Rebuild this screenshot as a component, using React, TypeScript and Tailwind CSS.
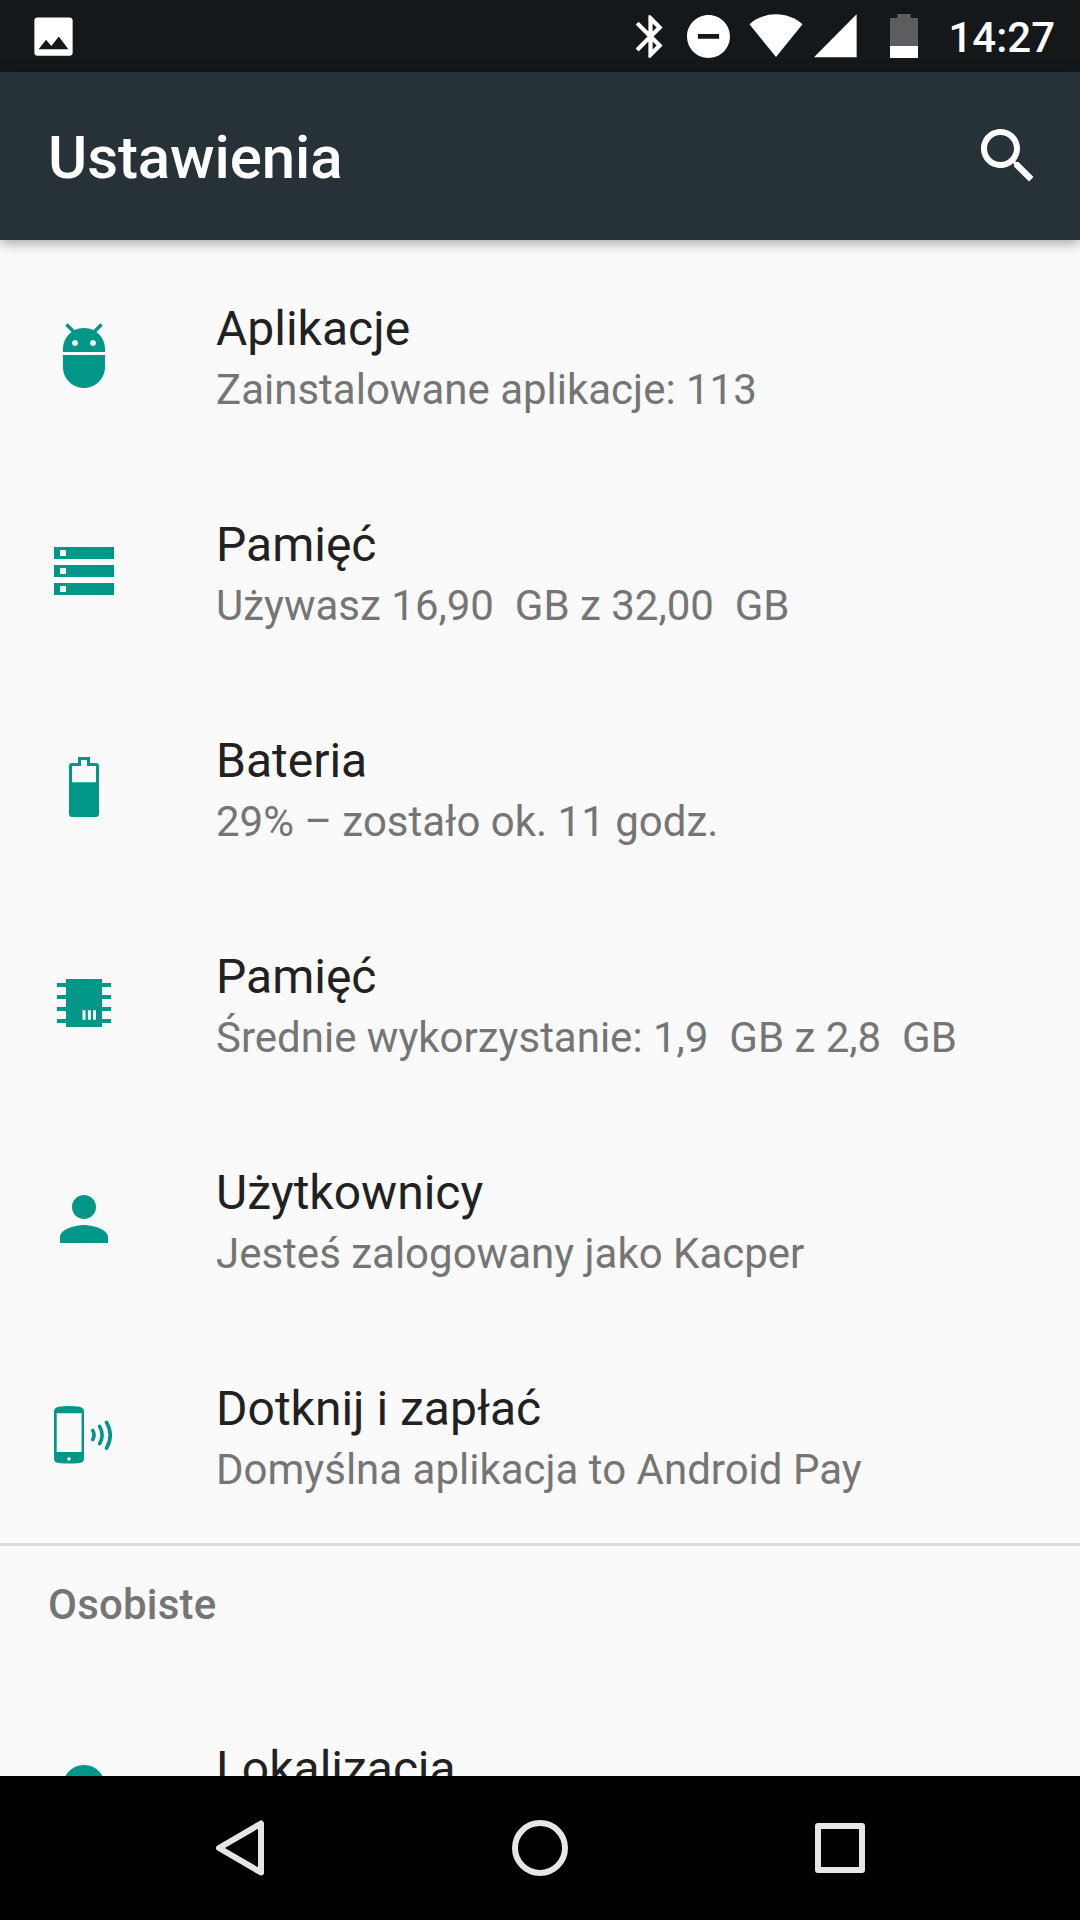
import type { ReactNode } from "react";

type SettingsItem = {
  title: string;
  summary?: string;
  icon: ReactNode;
};

const items: SettingsItem[] = [
  {
    title: "Aplikacje",
    summary: "Zainstalowane aplikacje: 113",
    icon: (
      <path d="M5 16c0 3.87 3.13 7 7 7s7-3.13 7-7v-4H5v4zM16.12 4.37l2.1-2.1-.82-.83-2.3 2.31C14.16 3.28 13.12 3 12 3s-2.14.28-3.09.75L6.6 1.44l-.82.83 2.1 2.1C6.14 5.64 5 7.68 5 10v1h14v-1c0-2.32-1.14-4.36-2.88-5.63zM9 9c-.55 0-1-.45-1-1s.45-1 1-1 1 .45 1 1-.45 1-1 1zm6 0c-.55 0-1-.45-1-1s.45-1 1-1 1 .45 1 1-.45 1-1 1z" />
    ),
  },
  {
    title: "Pamięć",
    summary: "Używasz 16,90\u00a0 GB z 32,00\u00a0 GB",
    icon: (
      <path d="M2 20h20v-4H2v4zm2-3h2v2H4v-2zM2 4v4h20V4H2zm4 3H4V5h2v2zm-4 7h20v-4H2v4zm2-3h2v2H4v-2z" />
    ),
  },
  {
    title: "Bateria",
    summary: "29% – zostało ok. 11 godz.",
    icon: (
      <path
        fillRule="evenodd"
        d="M16 4h-2V2h-4v2H8c-.6 0-1 .4-1 1v16c0 .6.4 1 1 1h8c.6 0 1-.4 1-1V5c0-.6-.4-1-1-1zM8 10.4V5h3V3h2v2h3v5.4H8z"
      />
    ),
  },
  {
    title: "Pamięć",
    summary: "Średnie wykorzystanie: 1,9\u00a0 GB z 2,8\u00a0 GB",
    icon: (
      <path
        fillRule="evenodd"
        d="M6 4h12v1.3h3v1.37h-3V9.3h3v1.37h-3v2.63h3v1.37h-3v2.63h3v1.37h-3V20H6v-1.33H3V17.3h3v-2.63H3V13.3h3v-2.63H3V9.3h3V6.67H3V5.3h3V4zM11.5 14.4v3.2h1v-3.2h-1zM13.3 14.4v3.2h1v-3.2h-1zM15.05 14.4v3.2h.95v-3.2h-.95z"
      />
    ),
  },
  {
    title: "Użytkownicy",
    summary: "Jesteś zalogowany jako Kacper",
    icon: (
      <path d="M12 12c2.21 0 4-1.79 4-4s-1.79-4-4-4-4 1.79-4 4 1.79 4 4 4zm0 2c-2.67 0-8 1.34-8 4v2h16v-2c0-2.66-5.33-4-8-4z" />
    ),
  },
  {
    title: "Dotknij i zapłać",
    summary: "Domyślna aplikacja to Android Pay",
    icon: (
      <>
        <path
          fillRule="evenodd"
          d="M2 4.3c0-1 .5-1.5 1.5-1.7 2.2-.37 4.8-.37 7 0 1 .2 1.5.7 1.5 1.7v15.5c0 .9-.5 1.4-1.5 1.5-2.2.27-4.8.27-7 0-1-.1-1.5-.6-1.5-1.5zM2.9 4.75v12.9h8.3V4.75zM7 19.4a.6.6 0 1 0 0 1.2.6.6 0 0 0 0-1.2z"
        />
        <g fill="none" stroke="currentColor" strokeWidth="1.2" strokeLinecap="round">
          <path d="M14.9 10.5q.9 1.5 0 3" />
          <path d="M17.2 9.1q1.7 2.9 0 5.8" />
          <path d="M19.5 7.8q2.5 4.3 0 8.6" />
        </g>
      </>
    ),
  },
];

const location: SettingsItem = {
  title: "Lokalizacja",
  icon: (
    <path d="M12 2C8.13 2 5 5.13 5 9c0 5.25 7 13 7 13s7-7.75 7-13c0-3.87-3.13-7-7-7zm0 9.5a2.5 2.5 0 0 1 0-5 2.5 2.5 0 0 1 0 5z" />
  ),
};

function StatusBar() {
  return (
    <div className="flex h-[72px] shrink-0 items-center bg-[#14181b] pr-[25px] pl-[28px] text-white">
      <svg className="size-[51px]" viewBox="0 0 24 24" fill="currentColor">
        <path d="M21 19V4.4C21 3.6 20.4 3 19.6 3H4.4C3.6 3 3 3.6 3 4.4v15.2c0 .8.6 1.4 1.4 1.4h15.2c.8 0 1.4-.6 1.4-1.4zM8.5 13.5l2.5 3.01L14.5 12l4.5 6H5z" />
      </svg>
      <div className="ml-auto flex items-center">
        <svg className="size-[51px]" viewBox="0 0 24 24" fill="currentColor">
          <path d="M17.71 7.71L12 2h-1v7.59L6.41 5 5 6.41 10.59 12 5 17.59 6.41 19 11 14.41V22h1l5.71-5.71-4.3-4.29 4.3-4.29zM13 5.83l1.88 1.88L13 9.59V5.83zm1.88 10.46L13 18.17v-3.76l1.88 1.88z" />
        </svg>
        <svg className="ml-[7px] size-[51px]" viewBox="0 0 24 24" fill="currentColor">
          <path d="M12 1.9C6.4 1.9 1.9 6.4 1.9 12S6.4 22.1 12 22.1 22.1 17.6 22.1 12 17.6 1.9 12 1.9zM17 13.1H7v-2.3h10v2.3z" />
        </svg>
        <svg className="ml-[15px] h-[44px] w-[54px]" viewBox="0 0 54 44" fill="currentColor">
          <path d="M27 43L.5 10.2C7.5 4 16.5.3 27 .3s19.5 3.7 26.5 9.9z" />
        </svg>
        <svg className="ml-[11px] h-[44px] w-[43px]" viewBox="0 0 43 44" fill="currentColor">
          <path d="M0 43.2H42.6V.3z" />
        </svg>
        <svg className="ml-[33.5px] h-[44px] w-[28px]" viewBox="0 0 28 44">
          <path className="fill-[#5b5d5f]" d="M7.3 0h13.4v4H28v28H0V4h7.3z" />
          <path className="fill-white" d="M0 32h28v12H0z" />
        </svg>
        <span className="ml-[30px] pt-[3px] text-[42px] leading-[69px] font-medium">14:27</span>
      </div>
    </div>
  );
}

function AppBar() {
  return (
    <header className="relative z-10 flex h-[168px] shrink-0 items-center justify-between bg-[#273238] pr-9 pl-12 text-white shadow-[0_3px_12px_rgba(0,0,0,0.36)]">
      <h1 className="pt-1 text-[60px] leading-[72px] font-medium tracking-[-0.1px]">Ustawienia</h1>
      <svg className="size-[72px]" viewBox="0 0 24 24" fill="currentColor">
        <path d="M15.5 14h-.79l-.28-.27C15.41 12.59 16 11.11 16 9.5 16 5.91 13.09 3 9.5 3S3 5.91 3 9.5 5.91 16 9.5 16c1.61 0 3.09-.59 4.23-1.57l.27.28v.79l5 4.99L20.49 19l-4.99-5zm-6 0C7.01 14 5 11.99 5 9.5S7.01 5 9.5 5 14 7.01 14 9.5 11.99 14 9.5 14z" />
      </svg>
    </header>
  );
}

function SettingsRow({ title, summary, icon }: SettingsItem) {
  return (
    <div className="flex h-[216px] shrink-0 items-start pl-12">
      <svg className="mt-[72px] size-[72px] shrink-0 text-[#009688]" viewBox="0 0 24 24" fill="currentColor">
        {icon}
      </svg>
      <div className="ml-24 pt-[51px] whitespace-nowrap">
        <div className="text-[48px] leading-[62px] text-[#212121]">{title}</div>
        {summary && (
          <div className="text-[42px] leading-[60px] text-[#757575]">{summary}</div>
        )}
      </div>
    </div>
  );
}

function NavBar() {
  return (
    <nav className="flex h-36 shrink-0 items-center justify-center bg-black text-[#e6e6e6]">
      <div className="flex w-[300px] justify-center">
        <svg className="size-[84px]" viewBox="0 0 84 84" fill="none" stroke="currentColor" strokeWidth="6" strokeLinejoin="round">
          <path d="M63 17.5v49L21 42z" />
        </svg>
      </div>
      <div className="flex w-[300px] justify-center">
        <svg className="size-[84px]" viewBox="0 0 84 84" fill="none" stroke="currentColor" strokeWidth="6">
          <circle cx="42" cy="42" r="25" />
        </svg>
      </div>
      <div className="flex w-[300px] justify-center">
        <svg className="size-[84px]" viewBox="0 0 84 84" fill="none" stroke="currentColor" strokeWidth="6" strokeLinejoin="round">
          <rect x="20" y="20" width="44" height="44" />
        </svg>
      </div>
    </nav>
  );
}

export default function App() {
  return (
    <div className="flex h-[1920px] w-[1080px] flex-col overflow-hidden bg-[#fafafa] font-[Roboto,sans-serif]">
      <StatusBar />
      <AppBar />
      <main className="flex min-h-0 flex-1 flex-col overflow-hidden pt-[7px]">
        {items.map((item, i) => (
          <SettingsRow key={i} {...item} />
        ))}
        <div className="h-[144px] shrink-0 border-t-[3px] border-[#dcdcdc] pt-[29px] pl-12">
          <h2 className="text-[42px] leading-[60px] font-medium tracking-[0.2px] text-[#757575]">Osobiste</h2>
        </div>
        {/* last row runs under the navigation bar */}
        <SettingsRow {...location} />
      </main>
      <NavBar />
    </div>
  );
}
